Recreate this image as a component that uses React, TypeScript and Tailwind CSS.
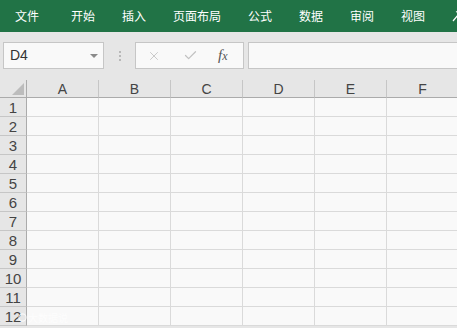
import { Check, X } from 'lucide-react'

const tabs = ['开始', '插入', '页面布局', '公式', '数据', '审阅', '视图']
const cols = ['A', 'B', 'C', 'D', 'E', 'F']
const rows = Array.from({ length: 12 }, (_, i) => i + 1)

export default function App() {
  return (
    <div className="relative w-[457px] h-[328px] overflow-hidden bg-[#e6e6e6] font-['Liberation_Sans','Noto_Sans_CJK_SC',sans-serif]">
      {/* Ribbon tabs */}
      <div className="h-[32px] bg-[#217346] flex items-center text-white text-[12px] pl-[15px] whitespace-nowrap font-['Noto_Sans_CJK_SC',sans-serif]">
        <span className="mr-[32px]">文件</span>
        <div className="flex gap-[27px]">
          {tabs.map((t) => (
            <span key={t}>{t}</span>
          ))}
        </div>
        <svg className="ml-[27px] shrink-0" width="14" height="16" viewBox="0 0 14 16" fill="none">
          <path d="M1 13 L6 7 M4 4 L9 2" stroke="white" strokeWidth="1.2" />
        </svg>
      </div>

      {/* Formula bar */}
      <div className="h-[48px] flex items-start pt-[10px] pl-[3px]">
        <div className="w-[101px] h-[27px] bg-[#f9f9f9] border border-[#c6c6c6] flex items-center justify-between pl-[6px] pr-[5px]">
          <span className="text-[14px] text-[#333]">D4</span>
          <span className="w-0 h-0 border-l-[4px] border-r-[4px] border-t-[4px] border-l-transparent border-r-transparent border-t-[#8a8a8a]" />
        </div>
        <div className="w-[31px] h-[27px] flex flex-col items-center justify-center gap-[2px]">
          <span className="w-[2px] h-[2px] bg-[#b8b8b8]" />
          <span className="w-[2px] h-[2px] bg-[#b8b8b8]" />
          <span className="w-[2px] h-[2px] bg-[#b8b8b8]" />
        </div>
        <div className="w-[109px] h-[27px] bg-[#f9f9f9] border border-[#c6c6c6] flex items-center pl-[11px]">
          <X className="w-[14px] h-[14px] text-[#c2c2c2]" strokeWidth={1.5} />
          <Check className="ml-[22px] w-[15px] h-[15px] text-[#c2c2c2]" strokeWidth={2} />
          <span className="ml-[20px] text-[15px] italic text-[#555] font-['Liberation_Serif',serif] leading-none">
            f<span className="text-[12px]">x</span>
          </span>
        </div>
        <div className="ml-[4px] flex-1 h-[27px] bg-[#f9f9f9] border border-[#c6c6c6] border-r-0" />
      </div>

      {/* Sheet */}
      <div className="flex flex-col">
        <div className="flex h-[18px] shrink-0">
          <div className="w-[27px] shrink-0 border-r border-b border-[#ababab] flex items-end justify-end pr-[2px] pb-[2px]">
            <svg width="12" height="12" viewBox="0 0 12 12">
              <path d="M12 0 L12 12 L0 12 Z" fill="#bcbcbc" />
            </svg>
          </div>
          {cols.map((c) => (
            <div
              key={c}
              className="w-[72px] shrink-0 border-r border-r-[#c6c6c6] border-b border-b-[#ababab] flex items-center justify-center text-[14px] text-[#444] leading-none pt-[1px]"
            >
              {c}
            </div>
          ))}
        </div>
        {rows.map((r) => (
          <div key={r} className="flex h-[19px] shrink-0">
            <div className="w-[27px] shrink-0 border-r border-r-[#ababab] border-b border-b-[#c6c6c6] flex items-center justify-center text-[15px] text-[#444] leading-none">
              {r}
            </div>
            {cols.map((c) => (
              <div key={c} className="w-[72px] shrink-0 bg-[#f9f9f9] border-r border-b border-[#dadada]" />
            ))}
          </div>
        ))}
      </div>

      {/* watermark */}
      <div className="absolute left-[18px] top-[310px] flex items-center gap-[1px]">
        <svg width="9" height="9" viewBox="0 0 10 10" fill="none">
          <circle cx="5" cy="5" r="4" stroke="rgba(255,255,255,0.75)" strokeWidth="1.2" />
        </svg>
        <span className="text-[10px] text-white/70 font-['Noto_Sans_CJK_SC',sans-serif]">大数据说</span>
      </div>
    </div>
  )
}
